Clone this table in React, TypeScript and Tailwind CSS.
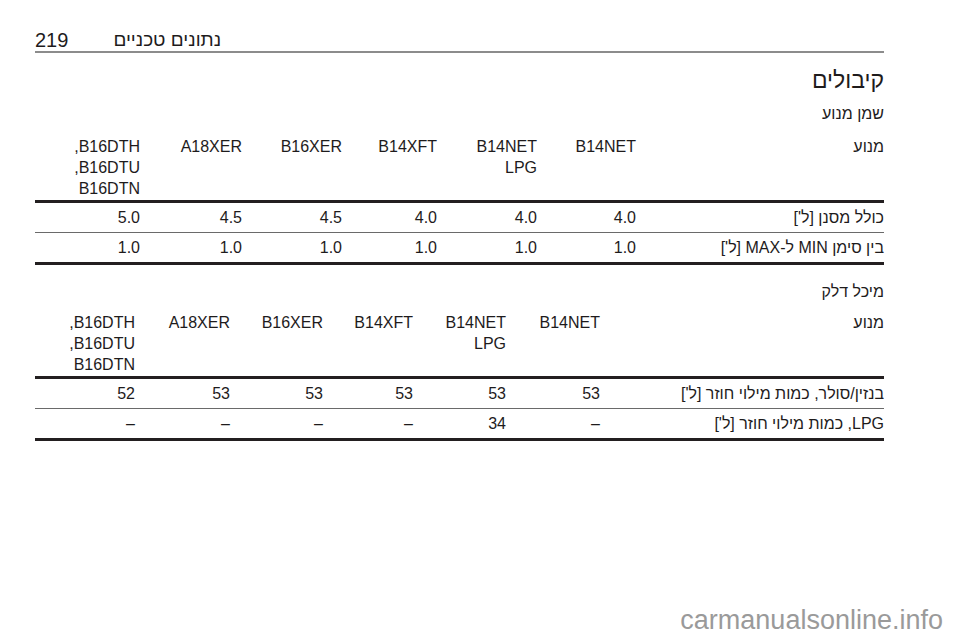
import React from "react";

const cols1 = "grid grid-cols-[248px_99px_100px_95px_100px_102px_105px]";
const cols2 = "grid grid-cols-[284px_94px_93px_90px_93px_95px_100px]";

const engines: React.ReactNode[] = [
  "B14NET",
  <>B14NET<br />LPG</>,
  "B14XFT",
  "B16XER",
  "A18XER",
  <>B16DTH,<br />B16DTU,<br />B16DTN</>,
];

function Table({
  cols,
  rows,
  mt,
}: {
  cols: string;
  rows: string[][];
  mt: string;
}) {
  return (
    <div dir="rtl" className={mt}>
      <div className={`${cols} text-[16px] leading-[21px] text-right`}>
        <div>מנוע</div>
        {engines.map((e, i) => (
          <div key={i}>{e}</div>
        ))}
      </div>
      <div className="mt-[1px] h-[3px] bg-[#231f20]" />
      {rows.map((r, ri) => (
        <React.Fragment key={ri}>
          {ri > 0 && <div className="h-px bg-[#6a6a6a]" />}
          <div className={`${cols} text-[16px] leading-[29px] h-[29px] text-right`}>
            {r.map((c, ci) => (
              <div key={ci} className="whitespace-nowrap">{c}</div>
            ))}
          </div>
        </React.Fragment>
      ))}
      <div className="h-[3px] bg-[#231f20]" />
    </div>
  );
}

export default function App() {
  return (
    <div className="relative w-[960px] h-[642px] bg-white text-[#1e1b1c] font-['Liberation_Sans',Arial,sans-serif] overflow-hidden">
      <div className="ml-[35px] w-[849px] pt-[29px]">
        <div className="flex items-end h-[22px]">
          <span className="text-[20px] leading-[22px]">219</span>
          <span dir="rtl" className="ml-[45px] text-[19px] leading-[22px]">נתונים טכניים</span>
        </div>
        <div className="h-[2px] bg-[#8c8c8c]" />

        <div dir="rtl" className="mt-[14px] text-[23px] leading-[26px] text-right">קיבולים</div>
        <div dir="rtl" className="mt-[11px] text-[16px] leading-[20px] text-right">שמן מנוע</div>

        <Table
          cols={cols1}
          mt="mt-[12px]"
          rows={[
            ["כולל מסנן [ל']", "4.0", "4.0", "4.0", "4.5", "4.5", "5.0"],
            ["בין סימן MIN ל-MAX [ל']", "1.0", "1.0", "1.0", "1.0", "1.0", "1.0"],
          ]}
        />

        <div dir="rtl" className="mt-[17px] text-[16px] leading-[20px] text-right">מיכל דלק</div>

        <Table
          cols={cols2}
          mt="mt-[10px]"
          rows={[
            ["בנזין/סולר, כמות מילוי חוזר [ל']", "53", "53", "53", "53", "53", "52"],
            ["LPG, כמות מילוי חוזר [ל']", "–", "34", "–", "–", "–", "–"],
          ]}
        />
      </div>

      <div className="absolute right-[17px] bottom-[8px] text-[27px] leading-[27px] text-[#9a9a9a]">
        carmanualsonline.info
      </div>
    </div>
  );
}
